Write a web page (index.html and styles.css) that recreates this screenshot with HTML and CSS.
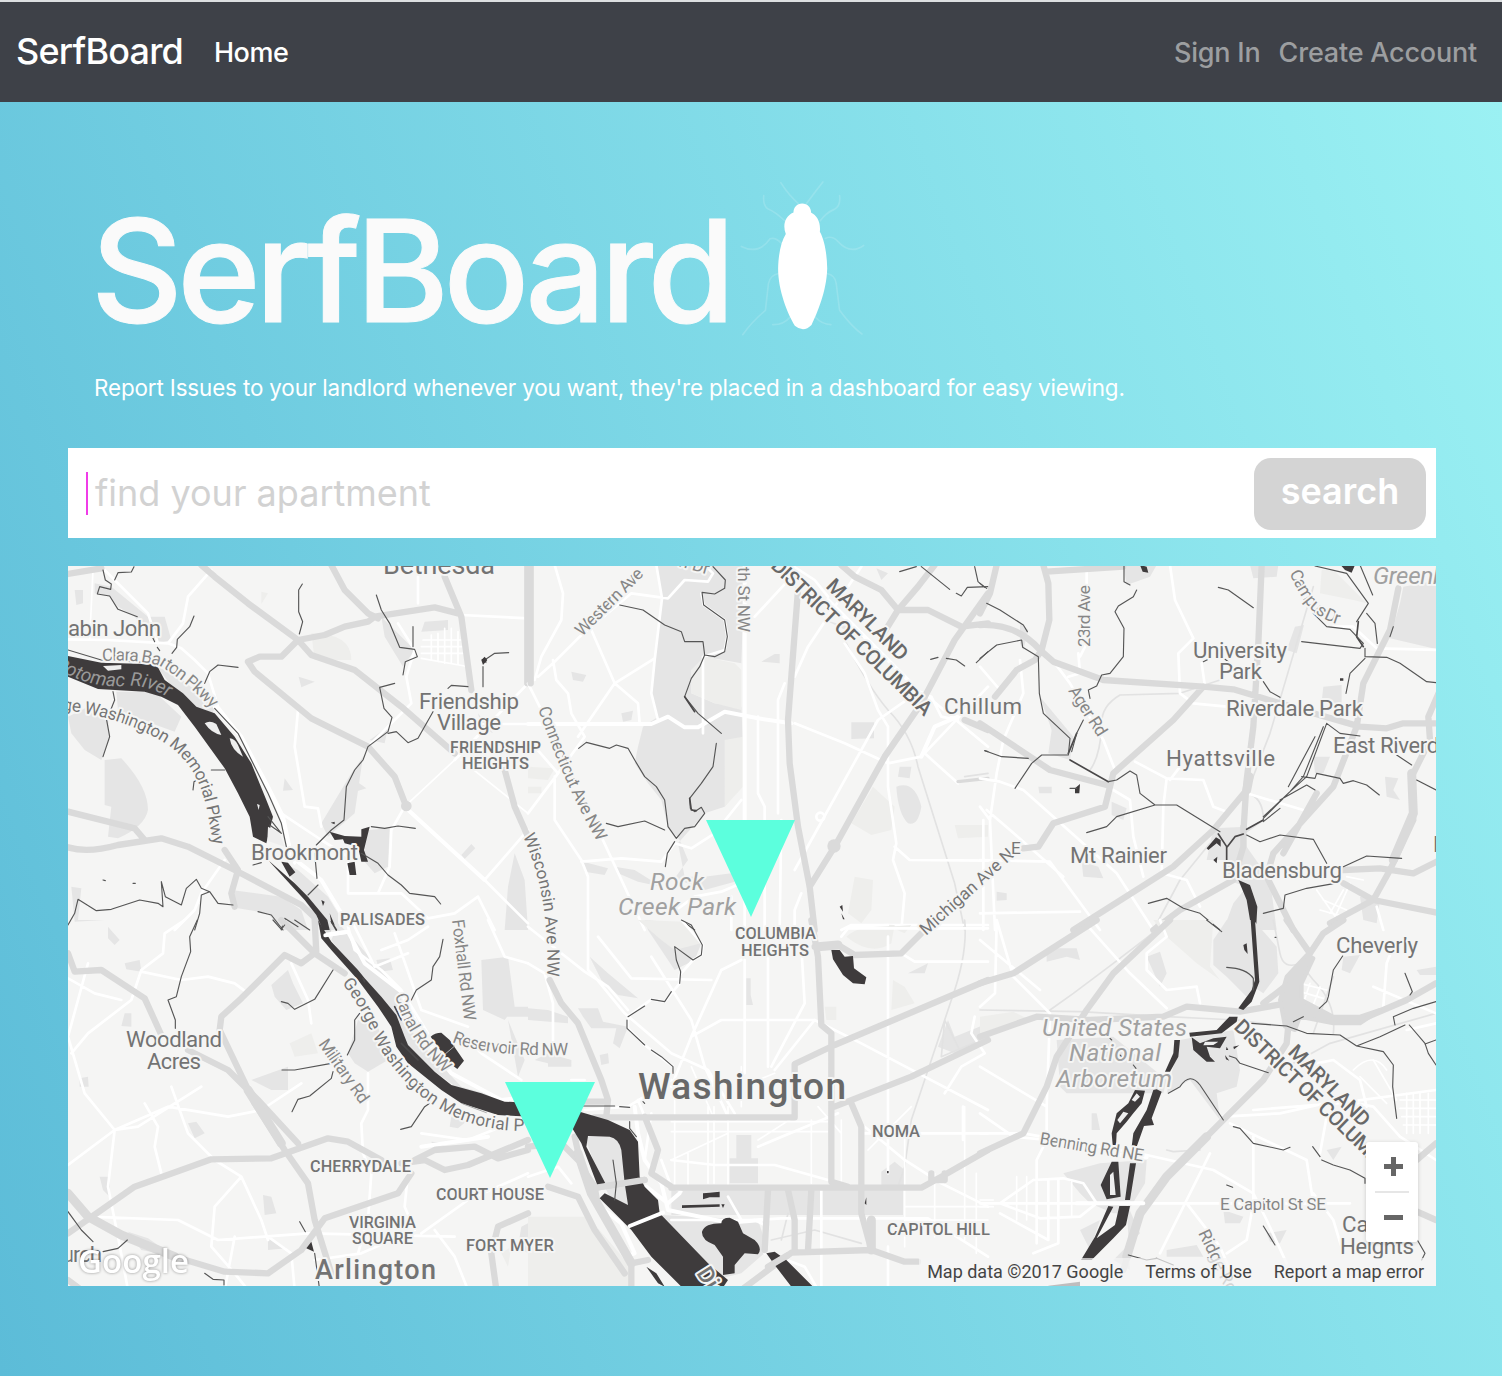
FILE: index.html
```html
<!DOCTYPE html>
<html lang="en">
<head>
<meta charset="utf-8">
<title>SerfBoard</title>
<link rel="stylesheet" href="styles.css">
</head>
<body>
<nav class="navbar">
  <a class="brand">SerfBoard</a>
  <a class="nav-link active">Home</a>
  <div class="nav-right"><a class="nav-link signin">Sign In</a><a class="nav-link create">Create Account</a></div>
</nav>
<main class="page">
  <header class="hero">
    <div class="title-row">
      <h1 class="title">SerfBoard</h1>
      <svg class="bug" viewBox="120 60 380 470">
        <g class="bug-legs">
          <path d="M296 132Q265 105 242 68M318 132Q345 95 368 66"/>
          <path d="M254 182Q225 155 203 146Q188 135 191 107M360 182Q378 158 402 148Q422 138 418 107"/>
          <path d="M245 250Q225 230 210 236Q175 285 124 259M375 235Q395 225 412 243Q450 285 490 256"/>
          <path d="M236 340Q210 345 205 370L196 450Q155 485 128 523M380 340Q405 345 408 370L418 450Q455 500 485 521"/>
          <path d="M270 470Q250 494 218 493M345 470Q365 492 392 493"/>
        </g>
        <path class="bug-body" d="M306 130C322 130 333 142 333 158C350 166 362 185 359 215C373 240 380 280 381 325C379 395 350 460 334 494Q310 518 284 496C262 460 234 390 234 325C235 280 243 245 257 222C247 195 254 168 280 157C280 142 290 130 306 130Z"/>
      </svg>
    </div>
    <p class="lead">Report Issues to your landlord whenever you want, they're placed in a dashboard for easy viewing.</p>
  </header>
  <form class="search">
    <span class="caret"></span>
    <span class="placeholder">find your apartment</span>
    <button class="search-btn" type="button">search</button>
  </form>
  <section class="map">
    <svg class="map-art" viewBox="68 566 1368 720">
      <!-- north west -->
      <g transform="translate(68 560) scale(.33333)">
        <path class="park" d="M80 70L130 80L240 170L290 170L310 240L270 250L200 170L150 140L125 110L80 100ZM265 318L330 350L445 440L430 462L350 430ZM145 395L260 395L340 470L320 515L250 490L150 450ZM0 470L60 440L120 470L125 540L100 600L50 570L10 520ZM110 600L160 595Q240 680 240 750Q230 800 150 835L120 830L130 740L110 735ZM20 90H45V130L25 135ZM1070 185L1140 180V210L1060 215ZM940 170L1040 270L1005 320L950 230ZM692 350L740 365L700 382ZM850 640L885 590L860 760L780 830L760 790ZM900 810L965 805L960 920L920 940L885 900ZM650 655L675 690L645 692ZM860 660L895 685L862 695ZM1180 885L1210 852L1222 865L1190 897ZM1340 880L1370 960L1380 1110H1310L1320 980ZM640 905L690 930L780 1010L810 1060L810 1110H760L700 1000ZM490 990L640 1010L700 1050L720 1110H640L600 1060L510 1045ZM10 980L40 985L30 1080L110 1080L20 1085ZM905 540L960 500L950 550ZM1230 460L1275 520L1240 500Z"/>
        <path class="park-soft" d="M730 220Q850 220 850 300L740 300ZM580 95L600 100L580 132Z"/>
        <path class="road thin" d="M1090 225V300M1110 220V305M1130 205V310M1150 205V310M1170 215V315M1065 240H1180M1060 260H1185M1060 280H1185M1060 295L1190 318M75 30L65 240M1160 600L1010 740M1180 600L1380 760"/>
        <path class="road" d="M0 238L120 240L300 250L340 265L380 300L420 340L450 440L520 530L600 680L640 770L680 910M110 30L240 160L270 250M430 30L360 110L345 190L300 250M1050 50V130M1180 165L1380 175M690 450L680 560L710 740L750 745L760 800M640 760L760 840L840 890L840 1000H1000L1080 1075L1160 1060L1230 1010M1160 600L1380 370M1010 740L970 810L965 920L930 1000M990 190L1040 270L1015 350L1030 430L900 560M1250 960L1380 810M1230 1010L1280 1110M470 900L400 1000L380 1050L320 1110M1200 492H1380M1250 960L1380 1090"/>
        <path class="road wide" d="M440 440L520 530L600 680L645 770L670 890L760 960L820 1060M1010 740L1250 960"/>
        <path class="major" d="M0 42L100 25M400 15L440 50L540 130L690 240L730 285L860 330L1000 440L1160 580M790 15L830 90L900 160L930 175M540 305L575 290L640 290L690 240L770 225L830 200L900 185L920 170L1100 142L1170 160M540 305L560 335L730 475L900 560L980 650L1015 740M1130 50L1180 170L1210 390M1310 630L1340 740L1380 830M1378 15V370M0 755L200 805L230 840M0 862Q60 880 150 855L280 835L360 860L500 930L700 1035L780 1110M470 870L510 930L490 1000L500 1040"/>
        <circle class="major-dot" cx="1015" cy="738" r="16"/>
        <path class="water" d="M0 288L100 308L265 313L290 360L345 400L385 440L440 460L500 530L550 610L595 720L615 770L595 850L555 830L545 770L510 700L470 625L380 500L330 435L280 410L230 395L90 387L0 350ZM600 900L680 970L720 1010L778 1080L785 1110H765L745 1065L710 1020ZM640 905L660 908L682 937L665 950ZM785 815L830 828L880 830L880 808L905 800L888 870L900 905L880 905L870 860L830 850L825 838L800 840ZM838 910L860 905L865 945L845 945ZM1240 300L1250 290L1258 300L1245 315Z"/>
        <path class="isle" d="M410 490Q425 480 445 492L460 525Q430 520 410 490ZM485 535Q500 535 510 555L525 590Q490 570 485 535ZM105 318L160 315V328L120 332ZM567 732L575 735L572 750ZM600 800L635 820L650 860L598 842Z"/>
        <path class="stream" d="M0 270L100 300L250 308M440 445L510 520L555 610L600 700L640 790L655 860M600 770L640 820M605 795L640 820"/>
        <path class="stream" d="M105 30L112 60L130 72L128 88L95 80L88 102L125 108L150 148L208 170M140 60L150 38L190 36L198 20M378 168L365 200L328 238L326 262L312 280M703 72L692 90V155L704 185L694 222M925 105L940 150L965 190L995 262L1040 268L1048 290L1012 305L1005 345M1035 200V260M980 370L935 382L948 445L972 472L960 515L900 560L885 600L860 630L835 680L828 780L790 810L745 855M960 520L985 515L1020 548L1050 535L1095 455M1250 300L1280 280L1322 278M1245 320V380M1140 385L1150 376L1200 380M410 370L425 335L450 315L510 322M135 395L140 420L120 470M115 475L125 530L105 590M375 690L378 665L395 655M430 630H470M740 880L747 955M910 800L950 805L990 798L1042 805M880 880L930 910L960 945L1000 975L1025 1000L1100 1010L1118 1032M0 1095L20 1060L30 1018L85 1052L130 1048L215 1020L270 1030L285 1040L280 965L292 1010L340 1035L355 985L385 958L400 985L425 995L450 1030L495 1035M425 995L400 1005L395 1060L380 1110M555 915L580 908M255 235L260 245M268 262L275 272M105 960L112 962M195 970H202M640 1110L650 1075L690 1100M720 1005L750 975M570 1055L610 1065L645 1110"/>
        <path class="water" d="M788 788L800 785V793ZM1240 298L1255 295V310ZM760 1020L770 1025L765 1038ZM785 1060L800 1095L790 1090Z"/>
      </g>
      <!-- north centre -->
      <g transform="translate(528 560) scale(.33333)">
        <path class="park" d="M385 15L400 120L380 300L370 400L390 470L345 500L330 560L320 610L360 670L400 720L420 800L455 840L480 900L440 955L530 990L620 965L610 940L530 950L470 950L450 850L530 760L590 740L645 670L640 640L590 600L645 550L640 440L560 430L490 400V330L530 290L640 310L650 15ZM700 305L740 282H755V310ZM130 335L175 345L165 365L135 360ZM280 460L315 452L310 480L285 485ZM970 487H1038V535L970 537ZM1105 680Q1160 660 1180 740Q1170 800 1140 790Q1110 760 1105 680ZM1115 620H1150L1145 655L1110 650ZM1045 25L1080 40L1060 60ZM165 905L240 925L230 945L170 935ZM260 920L320 930L400 980L330 965L270 940ZM890 180L1000 210L1005 235Z"/>
        <path class="park-soft" d="M490 330L530 290L620 310L640 330V450L560 430L490 400ZM590 540L645 530V680L590 740ZM1035 680L1100 740L1090 810L1030 825L970 790ZM980 950L1035 960L1030 1050L1000 1090L960 1060ZM1280 795H1380V830L1290 835ZM0 620L80 625L60 660L0 655ZM0 680H40V700H0Z"/>
        <path class="rail" d="M950 240Q1020 380 1080 450Q1150 520 1170 620L1280 970L1310 1110M1310 650L1380 640"/>
        <path class="road" d="M80 15L105 100L100 180L40 290L20 360M30 350L75 310L150 235L310 100L420 115L470 60L540 65L555 40L530 15M385 15L402 115L380 300L370 400L390 480M190 210L260 370L330 430L335 490M150 530L260 370L380 295M75 300L85 360L120 400L130 460L170 530M650 15V1110M690 470V700L710 740V1110M770 370L750 420V760M800 350L840 260L1000 20M680 170L800 40M800 490L950 550L1080 610L1180 590L1380 380M1080 610V680L1105 850L1095 900L1130 1000L1120 1110M1100 860L1145 900L1380 902M1150 410L1050 480L800 930M0 370L50 470M0 760L90 640L170 530M80 650V780L160 900L180 950V1110M160 905L280 895L400 905L440 850L490 865L560 820L640 720M220 830L350 1110M20 560L90 640M940 1110L970 1095H1380M1290 670L1190 580M1200 410L1380 560M800 1110V1050L820 1000M430 1060L500 1010L580 995L640 970M790 15L860 60L900 110M1120 370L1210 410L1240 470L1290 480M950 250L1010 340L1050 450L1080 500V610M610 1010V1110M760 780L755 1110M525 520V290L590 270L598 230L590 180L527 135L520 100"/>
        <path class="road wide" d="M0 492H370L420 470L470 502H510L590 455L690 475L790 490M1180 590L1220 500L1290 470M650 15V800M900 120L1150 370"/>
        <path class="major" d="M940 15L980 50L1060 90L1110 150L1200 150L1300 200L1380 190M1220 15L1170 80L1110 150L1070 215M1380 100L1280 240L1180 430L1070 590L920 860L845 980M810 90L780 480L785 610L810 800L845 980L860 1110M8 15V370M1310 480L1380 510"/>
        <path class="major minor" d="M1290 665L1380 655"/>
        <circle class="major-dot" cx="918" cy="858" r="20"/>
        <circle class="road" cx="877" cy="770" r="12"/>
        <path class="stream" d="M555 20L592 60L590 85L560 102L522 97L527 135L590 180L598 230L590 275L560 290L530 285L525 245L470 245L460 215L410 195L345 150L275 135M530 285L515 320L490 355L470 410L510 460L580 520M565 550L555 620L520 670L485 715L487 745L500 755L520 742L530 760L500 800L470 805L445 835L420 800L410 720L385 680L350 650L320 600L300 565L265 555L245 565L175 547L152 565M235 790L270 800L350 783L410 810M440 845L418 880L412 920M460 1080L500 1110M1115 35L1165 20M1180 20L1265 88M1285 100L1300 108L1318 82L1380 80M1340 20L1350 65L1370 82M1208 298L1230 292M1255 295L1285 300L1310 318M1345 308L1380 275M1370 572L1380 575"/>
        <path class="bank" d="M485 715L490 750L505 752M470 410L500 455"/>
        <path class="water" d="M935 1040L943 1035L945 1055ZM940 1060L950 1078H945Z"/>
      </g>
      <!-- north east -->
      <g transform="translate(980 560) scale(.33333)">
        <path class="park" d="M430 15H530L510 50L440 75ZM1270 80L1380 60V270L1230 235L1260 130ZM180 410L280 530L270 600L205 580L215 510ZM700 805L800 800V860L870 960L890 1110H730L760 1030L800 980L740 960L730 900H680ZM305 905L355 920L370 955L310 950ZM1030 380L1085 375V430L1025 425ZM1215 650L1255 655L1240 690L1260 720L1220 710ZM810 15H895L890 50L820 55ZM945 200L972 195L950 280L920 270ZM120 190L145 210L130 270L120 250ZM395 725L440 745L430 780L395 765ZM50 995L80 1000V1020L50 1022ZM175 680H215V700H178ZM1000 590H1050L1030 640L1005 640ZM1140 1010L1200 1020L1190 1090L1150 1080Z"/>
        <path class="park-soft" d="M1025 30H1060L1160 130L1120 120L1020 100Z"/>
        <path class="rail" d="M1000 80L870 520L800 700M720 360L600 400L420 405Q360 440 365 500Q360 590 330 630M690 850L600 960L520 1110M800 700Q850 710 850 780L750 850"/>
        <path class="road" d="M570 15L585 120L640 235L595 280L600 400L640 430L740 440M665 310L675 380M320 30V100M300 290L320 250M210 290L270 370L310 440L370 540L405 630M265 350L300 340L295 280M0 320L60 390M120 300L130 400L70 540L50 640L30 780L45 1110M465 605L560 655L550 740L545 940L620 960L660 1040M560 655L670 660L700 740L740 755M600 620L570 660M800 700L970 750M0 655L60 665L130 690L410 940L520 1110M400 690L450 720L460 830L490 950M0 900L210 905L360 1110M20 750L90 810L250 950M1060 200L1120 200L1190 265L1380 270M0 740L30 780M10 780V1110M0 1060L300 1055M1190 1040L1210 1110"/>
        <path class="road thin" d="M1010 990L1080 1090M1080 960L1140 1000M1090 990L1050 1060M1110 970L1070 1060M1030 1020L1100 1050M1020 1050L1090 1070M1100 950L1150 960"/>
        <path class="major" d="M50 15L30 100L0 160M0 195Q110 190 180 270L220 305L370 360L670 380L760 388L850 415L1000 460L1140 500L1220 505L1270 490H1380M190 15L205 70L208 180L185 270L165 300L110 330L45 410M200 35L430 20M845 15L835 250L820 500L800 660L790 820M670 380L580 480L400 640L375 740L220 790L175 860L130 865M0 490L210 630L380 675M800 690L700 810L580 920L280 1110M790 800V860L760 960L600 1050L520 1110M1255 85L1230 210L1150 370L1130 500L1060 680L970 780L880 880L860 950L940 1110M1010 700L910 880M1380 390L1345 470L1350 540L1295 650L1300 780L1230 930L1180 1020L1050 1090M1090 930L1200 925L1300 940L1380 900M1090 970L1180 1020L1380 1060"/>
        <path class="major spread" d="M808 650L800 690M1295 640L1300 760L1240 900"/>
        <path class="water" d="M775 960L810 975L832 1040L828 1110H815L800 1020ZM680 865L708 832L722 840V860L710 850L685 870ZM700 900L712 890L710 910ZM1082 15H1125L1115 38L1095 30ZM480 15L500 20L505 38L488 35ZM285 685L300 672L298 700H285ZM1080 355H1090V362H1080Z"/>
        <path class="bank" d="M740 900V860L715 822M742 860L765 830L790 822M265 580L290 520M270 600L385 665M1135 185L1130 230L1150 260M800 808L850 780"/>
        <path class="stream" d="M850 770L930 695L980 650L1040 490M850 775L930 695L970 650L1030 500M925 680L1005 530M0 295L50 255L125 240L128 262L175 290L178 400L190 460L270 535L265 585L185 585L155 610L105 685M15 572L65 590L145 595M385 665L410 660L450 633L470 645L480 700L525 735L410 770L380 800L320 818M525 735H590L720 815M470 90L460 110L415 138L405 155L432 205L430 290L390 340L365 345L350 378L325 390L330 415M432 15V65L450 75M310 480L290 520L275 575M715 82L745 90L820 143M850 365L870 395L900 412M1000 160L1040 200L1110 208L1150 250L1140 265L965 245M1005 18L1100 40L1165 130L1130 185M1140 15L1178 105M1160 160L1185 190L1192 250M1230 230L1240 200M1155 265V290L1220 292L1260 310L1340 365L1368 368M1155 295L1110 340L1098 400M1040 490L1080 520L1140 528M1250 585L1295 615M965 650L1005 655L1010 640L1080 655L1090 670L1120 662L1160 675L1198 705M800 825L840 845L900 825L1000 838L1040 910M1090 920L1160 888L1265 895M505 1030L560 1015L610 1045L660 1060L720 1110M850 1060L910 1045L915 1005L980 985L1065 970M850 785L900 745M900 720L980 675L1005 690M1310 660L1368 690M0 70L20 85M20 130L60 150L130 195L142 215M270 685H290M670 305L685 298M735 298L745 305"/>
      </g>
      <!-- south west -->
      <g transform="translate(68 920) scale(.33333)">
        <path class="park" d="M170 130L215 120L220 155L175 148ZM170 280H190V320L160 318ZM610 195L660 150L675 190L705 250L655 270L620 230ZM35 475L60 470L62 500H35ZM840 400L870 300L930 320L960 420L900 455L860 430ZM550 480L660 440V510H610ZM360 610L385 605L410 640L380 655ZM95 770H125V830L105 810ZM585 825L610 830L625 880L590 885ZM1240 120L1320 110L1340 260L1310 300L1245 270ZM1300 260H1380V290H1300ZM810 10L860 60L990 210L1040 350L1180 500L1320 540L1190 520L1080 440L1000 370L980 290L880 180L790 60ZM1320 300L1370 420L1350 470ZM1150 590L1200 600L1170 625L1145 620ZM180 935L240 955L320 1010L220 990ZM120 20L155 60L140 75L120 55ZM925 120L965 115L975 150L935 155ZM600 950L655 985L600 990ZM1090 665L1140 670L1100 690ZM1360 920L1380 910V1000L1350 980Z"/>
        <path class="park-soft" d="M665 370L730 340L750 400L680 410ZM1300 1000L1330 980L1320 1040Z"/>
        <path class="road" d="M350 0L290 40L285 100L220 150L190 240L60 340L10 400M60 130L0 350L50 520L140 630L120 800L150 950M0 175L80 220L160 240M220 155L340 180L420 170L500 190L540 220M0 735L140 630L210 620L400 500M310 500L360 640L440 720L520 770L580 900L600 960M230 550L270 620L260 680L280 760M140 630L300 560L480 590L580 570L700 490M670 130L720 240L730 310M940 90L1020 60L1080 20M60 890L330 900L450 960L720 940L1160 950M520 770L440 860L430 980L500 1060L540 1110M600 950L670 1000L680 1110M850 0L920 140L1020 100M980 40L1060 270L1200 320M1260 0L1310 110L1380 130M840 20L860 90L940 150L1000 210L1080 340M900 460V570L880 610L885 700L910 760L900 900L870 1000M1020 760L1010 860L1040 930L880 1000L740 1020M1180 340L1240 400L1360 480M1060 940L1200 840L1380 760M1060 640L1200 660L1300 620M150 950L180 1110M500 950L470 1110M1100 930L1160 1010L1200 1110"/>
        <path class="road wide" d="M770 45L840 35L890 130L1000 215L1060 340L1150 460L1300 540L1380 530M1060 680L1260 650"/>
        <path class="major" d="M0 100L20 155L100 150L230 235L280 345M360 390L480 450L570 540L690 670M740 100L700 130L650 105L520 235L460 290L455 330L560 550L650 690L720 790L740 900L790 1060M0 940L200 800L430 718L610 715L780 655L840 665L940 720M1000 730L1070 720L1130 750L1200 735L1380 660M1040 720L1100 690L1220 680L1290 715L1380 690M1030 760L990 820L770 895L700 990L600 1060L470 1055L320 1010L160 945L60 890L0 820M640 0L740 100L830 160M1380 880L1290 920L1270 1000L1285 1110M740 0L745 100M0 1080L40 1110"/>
        <path class="major spread" d="M0 820L60 890L160 945L320 1010M540 510L640 670"/>
        <path class="water" d="M750 0L790 65L870 150L890 175L940 230L985 285L1010 350L1020 375L1100 455L1150 495L1240 520L1310 545L1380 548V590L1290 585L1180 550L1120 510L1020 430L985 380L970 320L930 260L870 180L790 90L760 55ZM1088 350Q1100 338 1120 338L1145 360L1188 422L1168 447L1145 430ZM715 985L730 965L738 995Z"/>
        <path class="road wide" d="M772 46L840 35"/>
        <path class="cut" d="M1128 405L1160 378M1185 552L1255 578"/>
        <path class="bank" d="M790 5L805 30M885 175L890 185M980 260L1000 300M1000 370L1050 420"/>
        <path class="stream" d="M388 0L365 50L368 95L340 170L325 230L300 240L322 300V325M640 245L660 250L680 268L740 238L795 150M1125 58L1115 110L1095 140L1090 180L1045 210L1030 240M875 280L860 300V360L838 405M642 450H680L790 430M795 455L790 475L725 528L690 538L672 575M1085 550L1070 560L1030 620L998 628M0 875L40 930L75 965M105 995L150 985L178 960M410 1060L435 1078L468 1080V1095M695 905L712 935M740 1000L755 1110M615 0L640 28L650 15M680 0L725 30"/>
      </g>
      <!-- south centre -->
      <g transform="translate(528 920) scale(.33333)">
        <path class="park" d="M185 110L240 160L330 235L270 225L220 180ZM0 265L60 270L120 290V310L0 300ZM150 265H210L225 305L300 320L275 385L255 370L265 325H190L165 290ZM20 420L60 400L130 420V440H60V430ZM215 405L240 400L243 430L220 435ZM625 645H670V715H690V790H605V715H625ZM655 175H668V225L675 255H655ZM430 805H1125V885H430ZM170 650H260L285 690L300 860L250 840L210 760ZM400 885L690 900L720 990L640 1060L560 1080L410 910ZM1060 755L1100 725L1130 750V800H1060ZM1230 380L1260 300L1280 350L1380 310V350L1280 400ZM1140 160L1200 130L1190 160ZM350 0L470 10L520 70L500 120L440 150L360 30Z"/>
        <path class="park-soft" d="M0 890H180L300 1030L310 1110H0ZM955 50Q1000 10 1100 15L1090 70Q1030 110 955 50ZM1095 180L1130 200L1160 250L1090 270ZM1085 20L1150 15L1130 40ZM330 0L470 5L520 70L440 90L400 60ZM890 260H925V300H895Z"/>
        <path class="rail" d="M1310 0Q1320 100 1270 240L1150 600L1130 740L1110 800M1380 350L1240 410L1250 300L1300 400M730 960L860 930L1000 970M780 880L760 960"/>
        <path class="road thin" d="M440 520V800M480 700V800M540 560V790M558 560V790M600 560V800M640 440V560M850 600V790M940 600V790M1130 640V980M1220 760V950M1310 560V960M1345 760V1000M430 635H900M430 605H900M690 660L800 590M870 560L940 640M430 720L600 640M1020 690L1150 560M1130 900H1380M1130 860H1380M560 600L490 440M740 460L690 480"/>
        <path class="road" d="M180 0V150L200 170L290 280L430 400L540 450L620 580M0 20L100 100L170 155L240 200L300 270M0 130L50 160L75 250V390M210 50L310 175L550 180M370 110L490 300L530 440L600 590M430 500L490 350L580 150L640 120M490 350L580 300H860L1000 370L1380 570M650 120V460M720 80V440M820 80L830 250L730 440M860 300L740 450M1080 50V760M970 20L1080 15M940 50L960 25H1380M1120 100L1160 125H1380M1010 620L1130 720L1240 790L1380 860M1340 290L1330 340L1370 400L1300 440L1250 520M1000 640H1380M430 480L300 560L170 570M430 720L560 735H740L900 780M400 720L430 800L460 815M350 590L330 540M370 580L350 720M880 800V1110M930 580L690 680M430 900H690L760 895H1200L1380 1010M680 900L720 920L710 1000M1080 980V1110M0 770L90 740L130 790M130 480H170M1305 560V660M640 900L600 830M750 1010L830 1040L870 1110M460 0L525 75L520 105L495 120L455 165V190L410 245L370 238L300 290V325L350 375L435 440"/>
        <path class="road wide" d="M320 560L330 640L350 720L400 790L420 870L600 908L700 900M355 800L420 850L455 820M230 870L280 910L320 1000L290 1010L240 920"/>
        <path class="major" d="M65 180L100 250L150 310L220 480L240 540L235 590M170 545H235M200 592H800V432L920 375L1380 180M850 0L870 110L880 315L910 340V785L960 800M860 80L930 75L980 105L1120 100L1180 40M1380 360L1150 470L920 560M970 550L1000 620V880L1030 990M430 803H1180L1240 770L1380 690M205 803L350 780M350 590L390 690L370 760L430 800M140 650L160 740L200 800L210 860L310 1030L310 1110M0 680L100 670L150 720M60 800L150 830L200 930L290 1060M720 810L710 990M780 810L800 900V990M850 810L840 990M640 1110L790 998L1030 990L1130 1025H1170M310 1030L360 1020M1210 760V780H1250V760"/>
        <path class="major spread" d="M150 700L190 820L310 1030M870 80L930 75M1030 900V990"/>
        <path class="water" d="M155 575L240 600L305 630L330 665L335 770L350 800L390 840L395 880L540 1030L600 1080L580 1110H470L370 1010L310 930L215 835L230 820L300 855L290 790L280 690Q272 655 245 650L180 648L175 680L232 790L210 800L160 670L130 620ZM910 90H935L950 110L975 108L978 145L1015 172L1010 193L975 190L945 165L915 118ZM522 935Q530 910 580 910Q580 893 605 893L630 905L645 940L680 960Q705 985 690 1003L650 1000L620 1035V1060L585 1065V1010L560 975Q520 960 522 935ZM715 1000L740 995L775 1020L855 1100H790L740 1035ZM525 820L545 818L575 815V832L545 832L525 838ZM462 856L575 853V860L462 864ZM355 1040L385 1060L410 1100L390 1090ZM1015 832V855L1010 850ZM1077 753H1082V760H1077ZM580 853H590L585 864Z"/>
        <path class="major" d="M205 803L350 780M720 1040L780 1005"/>
        <path class="road wide" d="M305 918L405 878"/>
        <path class="stream" d="M460 0L490 15L523 75L520 105L495 120L440 80L445 120L458 155L455 190M430 215L410 245L370 238M350 258L300 290M297 300V325L350 375M370 390L400 410L435 440V460M165 558H260M275 560L305 562M305 605V625L325 650M255 720L265 790L260 840M350 550L345 545"/>
      </g>
      <!-- south east -->
      <g transform="translate(980 920) scale(.33333)">
        <path class="park" d="M700 60L740 0H820L890 80L895 160L850 220L820 200L800 230L740 170L700 135ZM600 360L760 330L780 450L770 500L710 520L720 600L630 480L560 520ZM200 100L225 85H290L300 120L260 110L200 125ZM230 360L400 350L560 480L550 520H260L240 500ZM250 760L360 730L500 720L495 790L440 880H400L330 850L300 820ZM335 580H350L360 630H335ZM500 110L540 95L560 160L540 200ZM730 870L790 890L780 910H735ZM560 990L650 975L670 1010H560ZM860 940L920 930L900 970L870 965ZM1090 110L1140 105L1110 160L1085 150ZM1040 690L1085 680L1060 720ZM300 930L360 900L330 990ZM400 1020L480 940L440 850L450 1050ZM1310 150L1368 140V165L1320 165Z"/>
        <path class="park-soft" d="M520 0H700L690 140L720 180L650 130L560 50ZM0 290L100 275L150 300L0 340Z"/>
        <path class="rail" d="M0 270L300 275L560 290L770 300L920 320M570 0L400 130L280 220L210 270M880 0L900 100Q910 150 960 130L1000 180Q1070 250 1060 340M1060 170L1000 340M940 430L1050 370L1368 280M560 690L580 695L660 690"/>
        <path class="road" d="M325 20L450 160L560 265M540 0L560 50L500 100V150L560 210L650 200L660 250M0 440L200 560L210 280L100 170L50 0M0 580L100 650L200 660M50 10L45 220L0 260M0 640H130L500 705L700 750L820 820L860 900L920 1030M200 560V660L170 720V970M0 850H1110M160 780L250 775L310 790L350 850L300 890L180 895L60 850L160 780M205 780V960L60 880M235 780V970L160 1000M820 570L1070 550L1368 510M750 610L980 720L1000 850M690 700L620 840L540 1000M620 850L720 980L750 1050M820 650V850L800 960L740 1000M1010 430L1060 420L1140 480L1160 560M1240 80L1220 130L1210 260M1020 700L1040 590M1280 330L1368 310M1000 820L1060 900L1090 1000M730 590L900 580L1080 540L1180 560L1260 650L1368 720M1180 200L1368 280M0 60L180 210"/>
        <path class="road thin" d="M1260 540H1368M1260 565H1368M1265 590H1368M1270 615H1368M1280 520V640M1300 520V640M1320 520V640M1345 520V640M960 190L1040 210M960 215L1030 235M990 190L970 250M1020 200L1000 255M1120 450Q1180 390 1220 450M1140 470L1220 550M1180 420L1250 540M110 770V900M140 770V900M275 780V890M0 840H40M0 860H40"/>
        <path class="major" d="M350 0L100 160L0 190M570 0L400 160L320 270L230 410L200 500L130 640L0 700M0 350L170 290L330 300L550 290L620 260L780 275L920 250L1060 300H1140L1280 240L1368 190M1090 0L1030 40L990 100L935 210L920 370L850 480L720 610L560 770L480 880L430 1050M920 0L990 100M850 250L940 180M1310 720L1368 670M1300 870L1368 900"/>
        <path class="junction" d="M900 240L920 170L980 105L1000 115L965 190V240L1060 290H1140L1200 270L1140 310H1060L960 290L945 330L915 320Z"/>
        <path class="major spread" d="M680 650L560 770L480 880L440 1010"/>
        <path class="water" d="M812 0H825L838 185L815 245L790 270L775 265L815 210L825 180ZM748 290H773L770 305L725 340L630 350L628 338L710 330ZM583 360H600L595 410L570 455H555L580 400ZM530 508L545 515L515 595L522 615L492 618L470 680H455L460 640L500 570L520 510ZM465 510L495 512L485 550L460 580L440 605L410 640L408 675H398L395 640L410 580L445 550ZM395 725H415L422 830L380 838L362 795ZM450 730H468L450 840H435ZM385 858L400 860L350 955L405 915L418 858H450L438 915L400 955L335 1020H303L345 950ZM205 1097L300 1085V1100H205ZM635 352L660 370L700 355L740 350L720 385L680 380L690 410L705 425H680L640 390ZM790 75L800 70L803 102L793 90Z"/>
        <path class="isle" d="M470 520L480 530L465 545L455 540ZM430 575L445 580L420 610L412 600ZM390 765L400 755L407 825H390ZM675 365L715 365L700 375L670 376Z"/>
        <path class="road wide" d="M290 850H490M380 700L500 712"/>
        <path class="water" d="M740 380L745 390H738ZM760 380L778 376L762 388ZM735 405L748 422L738 418Z"/>
        <path class="stream" d="M680 0L725 35M740 142Q800 145 820 175V210M1088 108L1060 150L1045 230L1040 245L1018 265M970 290L940 305M815 310L920 318L980 340L1080 345L1130 378L1200 350L1275 315M1130 378L1210 395L1240 435L1238 500L1250 595M1368 245L1300 265L1240 290L1245 315M1275 160L1297 215L1290 225M1288 315L1335 370L1345 400L1368 435M1335 372L1368 360M748 408L768 415L780 430L865 458M565 520L600 500Q630 455 660 495L730 600M760 620L780 625L820 670L910 690L930 682M998 680L1020 710M1025 720L1060 735L1110 750L1155 775V790M740 795L758 802M850 918L885 975M445 1005L500 1020L530 1015L580 1035M1312 960L1335 1000L1325 1020M390 355L395 360M460 435L468 445M885 52H888M420 405L425 410"/>
      </g>

      <path id="p-clara" d="M102 661Q140 659 160 666Q186 681 215 712" fill="none"/>
      <path id="p-potomac" d="M54 668C78 681 100 688 128 686C143 685 155 690 172 699" fill="none"/>
      <path id="p-gwest" d="M62 710C95 713 140 725 172 748C196 768 203 790 208 815L215 854" fill="none"/>
      <path id="p-gsouth" d="M342 983C356 1000 366 1020 376 1042C392 1070 415 1095 440 1109C465 1124 495 1132 534 1131" fill="none"/>
      <path id="p-conn" d="M538 709C552 748 568 790 599 845" fill="none"/>
      <path id="p-wis" d="M523 836C540 875 549 915 547 980" fill="none"/>
      <path id="p-res" d="M452 1042Q485 1057 572 1055" fill="none"/>
      <path id="p-canal" d="M395 995C403 1027 420 1050 447 1076" fill="none"/>
      <path id="p-campus" d="M1289 573C1302 598 1308 617 1344 626" fill="none"/>
      <path id="p-ager" d="M1068 691Q1083 714 1101 742" fill="none"/>
      <g class="label street">
        <text><textPath href="#p-clara" textLength="126">Clara Barton Pkwy</textPath></text>
        <text class="river"><textPath href="#p-potomac" textLength="120">Potomac River</textPath></text>
        <text class="parkway"><textPath href="#p-gwest" textLength="226">ge Washington Memorial Pkwy</textPath></text>
        <text class="parkway"><textPath href="#p-gsouth" textLength="250">George Washington Memorial P</textPath></text>
        <text><textPath href="#p-conn" textLength="146">Connecticut Ave NW</textPath></text>
        <text class="parkway"><textPath href="#p-wis" textLength="144">Wisconsin Ave NW</textPath></text>
        <text><textPath href="#p-res" textLength="118">Reservoir Rd NW</textPath></text>
        <text><textPath href="#p-canal" textLength="94">Canal Rd NW</textPath></text>
        <text><textPath href="#p-campus" textLength="74">Campus Dr</textPath></text>
        <text><textPath href="#p-ager" textLength="56">Ager Rd</textPath></text>
        <text transform="translate(582 637) rotate(-45)" textLength="88">Western Ave</text>
        <text transform="translate(678 566) rotate(16)">n Dr</text>
        <text transform="translate(738 567) rotate(90)" textLength="65">th St NW</text>
        <text transform="translate(1090 647) rotate(-90)" textLength="62">23rd Ave</text>
        <text class="parkway" transform="translate(926 936) rotate(-42)" textLength="120">Michigan Ave N</text>
        <text class="parkway" x="1011" y="854">E</text>
        <text transform="translate(452 920) rotate(83)" textLength="102">Foxhall Rd NW</text>
        <text transform="translate(318 1044) rotate(55)" textLength="74">Military Rd</text>
        <text transform="translate(1039 1144) rotate(9.5)" textLength="105">Benning Rd NE</text>
        <text x="1220" y="1210" textLength="106">E Capitol St SE</text>
        <text transform="translate(1198 1233) rotate(64)">Ridge Rd</text>
      </g>
      <g class="label town">
        <text x="68" y="636" textLength="93">abin John</text>
        <text x="419" y="709" textLength="100">Friendship</text><text x="437" y="730" textLength="64">Village</text>
        <text x="944" y="714" textLength="78">Chillum</text>
        <text x="1193" y="658" textLength="94">University</text><text x="1219" y="679" textLength="43">Park</text>
        <text x="1226" y="716" textLength="137">Riverdale Park</text>
        <text x="1166" y="766" textLength="109">Hyattsville</text>
        <text x="1333" y="753" textLength="118">East Riverda</text>
        <text x="1070" y="863" textLength="97">Mt Rainier</text>
        <text x="1222" y="878" textLength="120">Bladensburg</text>
        <text x="251" y="860" textLength="107">Brookmont</text>
        <text x="1336" y="953" textLength="82">Cheverly</text>
        <text x="126" y="1047" textLength="96">Woodland</text><text x="147" y="1069" textLength="54">Acres</text>
        <text x="1342" y="1232">Ca</text><text x="1340" y="1254" textLength="74">Heights</text>
        <text x="62" y="1262" textLength="40">urch</text>
        <text x="1433" y="852">L</text>
      </g>
      <g class="label hood">
        <text x="450" y="753" textLength="91">FRIENDSHIP</text><text x="462" y="769" textLength="67">HEIGHTS</text>
        <text x="340" y="925" textLength="85">PALISADES</text>
        <text x="735" y="939" textLength="81">COLUMBIA</text><text x="741" y="956" textLength="68">HEIGHTS</text>
        <text x="872" y="1137" textLength="48">NOMA</text>
        <text x="310" y="1172" textLength="101">CHERRYDALE</text>
        <text x="436" y="1200" textLength="108">COURT HOUSE</text>
        <text x="349" y="1228" textLength="67">VIRGINIA</text><text x="352" y="1244" textLength="61">SQUARE</text>
        <text x="466" y="1251" textLength="88">FORT MYER</text>
        <text x="887" y="1235" textLength="103">CAPITOL HILL</text>
      </g>
      <g class="label nature">
        <text x="650" y="890" textLength="54">Rock</text><text x="618" y="915" textLength="118">Creek Park</text>
        <text x="1042" y="1036" textLength="145">United States</text><text x="1069" y="1061" textLength="92">National</text><text x="1056" y="1087" textLength="116">Arboretum</text>
        <text x="1373" y="584" textLength="98">Greenbelt</text>
      </g>
      <g class="label border">
        <text transform="translate(825 587) rotate(45)" textLength="106">MARYLAND</text>
        <text transform="translate(770 567) rotate(44.2)" textLength="215">DISTRICT OF COLUMBIA</text>
        <text transform="translate(1287 1053) rotate(45)" textLength="106">MARYLAND</text>
        <text transform="translate(1233 1028) rotate(44.2)" textLength="215">DISTRICT OF COLUMBIA</text>
      </g>
      <text class="label city-mid" x="383" y="574" textLength="112">Bethesda</text>
      <text class="label city-mid bold" x="315" y="1279" textLength="121">Arlington</text>
      <text class="label city" x="638" y="1099" textLength="208">Washington</text>
      <text class="label district" transform="translate(696 1273) rotate(58)">District</text>

      <path class="pin" d="M706 820H795L751 917ZM505 1082H595L550 1178Z"/>
      <text class="google" x="78" y="1273" textLength="111">Google</text>
    </svg>
    <div class="zoom"><button class="zoom-btn plus" type="button"></button><span class="zoom-rule"></span><button class="zoom-btn" type="button"></button></div>
    <footer class="credits"><span>Map data ©2017 Google</span><span>Terms of Use</span><span>Report a map error</span></footer>
  </section>
</main>
</body>
</html>
```
FILE: styles.css
```css
* { box-sizing: border-box; }
body { margin: 0; font-family: Inter, "Liberation Sans", sans-serif; }
.navbar { display: flex; align-items: center; height: 102px; padding: 0 25px 0 16px; background: #3e4148; border-top: 2px solid #dcdfe1; color: #fff; }
.brand { width: 198px; padding-bottom: 2px; font-size: 36px; font-weight: 500; letter-spacing: -0.8px; line-height: 44px; white-space: nowrap; }
.nav-link { font-size: 27px; font-weight: 500; letter-spacing: -0.2px; color: #9c9ea0; white-space: nowrap; }
.nav-link.active { letter-spacing: -0.5px; color: #fff; }
.nav-right { display: flex; gap: 18px; margin-left: auto; }
.page { height: 1274px; padding: 78px 66px 0 68px; background: linear-gradient(70deg, #5cbcd8, #9bf1f3); }
.hero { height: 268px; padding-left: 26px; }
.title-row { display: flex; align-items: flex-start; height: 182px; }
.title { width: 646px; margin: 4px 0 0 -3px; padding-right: 3px; font-size: 142px; line-height: 172px; font-weight: 500; letter-spacing: -5.4px; color: #fafafa; -webkit-text-stroke: 1px #fafafa; white-space: nowrap; flex: 0 0 649px; }
.bug { width: 127px; height: 157px; }
.bug-legs { fill: none; stroke: #fff; stroke-width: 5; stroke-opacity: .15; stroke-linecap: round; }
.bug-body { fill: #fff; }
.lead { margin: 12px 0 0; font-size: 22.4px; line-height: 28px; letter-spacing: -0.13px; color: #fff; white-space: nowrap; }
.search { display: flex; align-items: center; height: 90px; padding: 0 10px 0 18px; background: #fff; }
.caret { width: 2px; height: 43px; background: #f03ce8; }
.placeholder { margin-left: 7px; font-size: 36px; color: #d2d2d2; white-space: nowrap; }
.search-btn { width: 172px; height: 72px; margin: 2px 0 0 auto; padding: 0 0 6px; border: 0; border-radius: 17px; background: #d4d4d4; color: #fff; font: 600 36px Inter, sans-serif; }
.map { position: relative; height: 720px; margin-top: 28px; overflow: hidden; background: #f5f5f4; font-family: Roboto, sans-serif; }
.map-art { display: block; width: 1368px; height: 720px; }
.park { fill: #e5e5e5; }
.park-soft { fill: #eeeeec; }
.rail, .road, .major, .stream, .bank, .cut { fill: none; stroke-linejoin: round; stroke-linecap: round; }
.rail { stroke: #e2e2e2; stroke-width: 5; }
.road { stroke: #fff; stroke-width: 8; }
.road.thin { stroke-width: 5; }
.road.wide { stroke-width: 12; }
.major { stroke: #dadada; stroke-width: 19; }
.major.minor { stroke-width: 10; }
.major.spread { stroke-width: 27; }
.junction { fill: #dadada; stroke: #dadada; stroke-width: 12; stroke-linejoin: round; }
.major-dot { fill: #dadada; }
.water { fill: #3e3b3c; }
.isle { fill: #eee; }
.cut { stroke: #aaa; stroke-width: 3; }
.stream { stroke: #555; stroke-width: 3.4; }
.bank { stroke: #4a4849; stroke-width: 5; }
.label { fill: #737373; stroke: #f5f5f4; stroke-width: 4px; stroke-linejoin: round; paint-order: stroke; }
.street { font-size: 17.2px; fill: #868686; }
.parkway { fill: #767676; }
.river { font-size: 19px; font-style: italic; fill: #999; stroke: none; }
.town { font-size: 22.3px; }
.hood { font-size: 16.5px; font-weight: 500; }
.nature { font-size: 24.5px; font-style: italic; fill: #a0a0a0; }
.border { font-size: 20.5px; font-weight: 500; fill: #686868; }
.city-mid { font-size: 27px; }
.bold { font-weight: 500; }
.city { font-size: 37px; font-weight: 500; fill: #686868; }
.district { font-size: 23px; font-weight: 500; }
.pin { fill: #5cffdd; }
.google { font: 600 33px "Open Sans", sans-serif; fill: #fff; filter: drop-shadow(0 0 1.5px rgba(0,0,0,.4)); }
.zoom { position: absolute; right: 18px; top: 576px; display: flex; flex-direction: column; align-items: center; width: 52px; height: 100px; border-radius: 3px; background: #fff; box-shadow: 0 1px 4px rgba(0,0,0,.18); }
.zoom-btn { width: 52px; height: 50px; padding: 0; border: 0; background: linear-gradient(#666, #666) 18px center / 19px 5px no-repeat; }
.zoom-btn.plus { background: linear-gradient(#666, #666) 18px center / 19px 5px no-repeat, linear-gradient(#666, #666) 25px center / 5px 19px no-repeat; }
.zoom-rule { flex: 0 0 2px; width: 34px; background: #e6e6e6; }
.credits { position: absolute; right: 0; bottom: 0; display: flex; gap: 22px; height: 28px; padding: 0 12px 0 8px; line-height: 28px; font-size: 18px; color: #444; background: rgba(245,245,245,.7); white-space: nowrap; }
```
